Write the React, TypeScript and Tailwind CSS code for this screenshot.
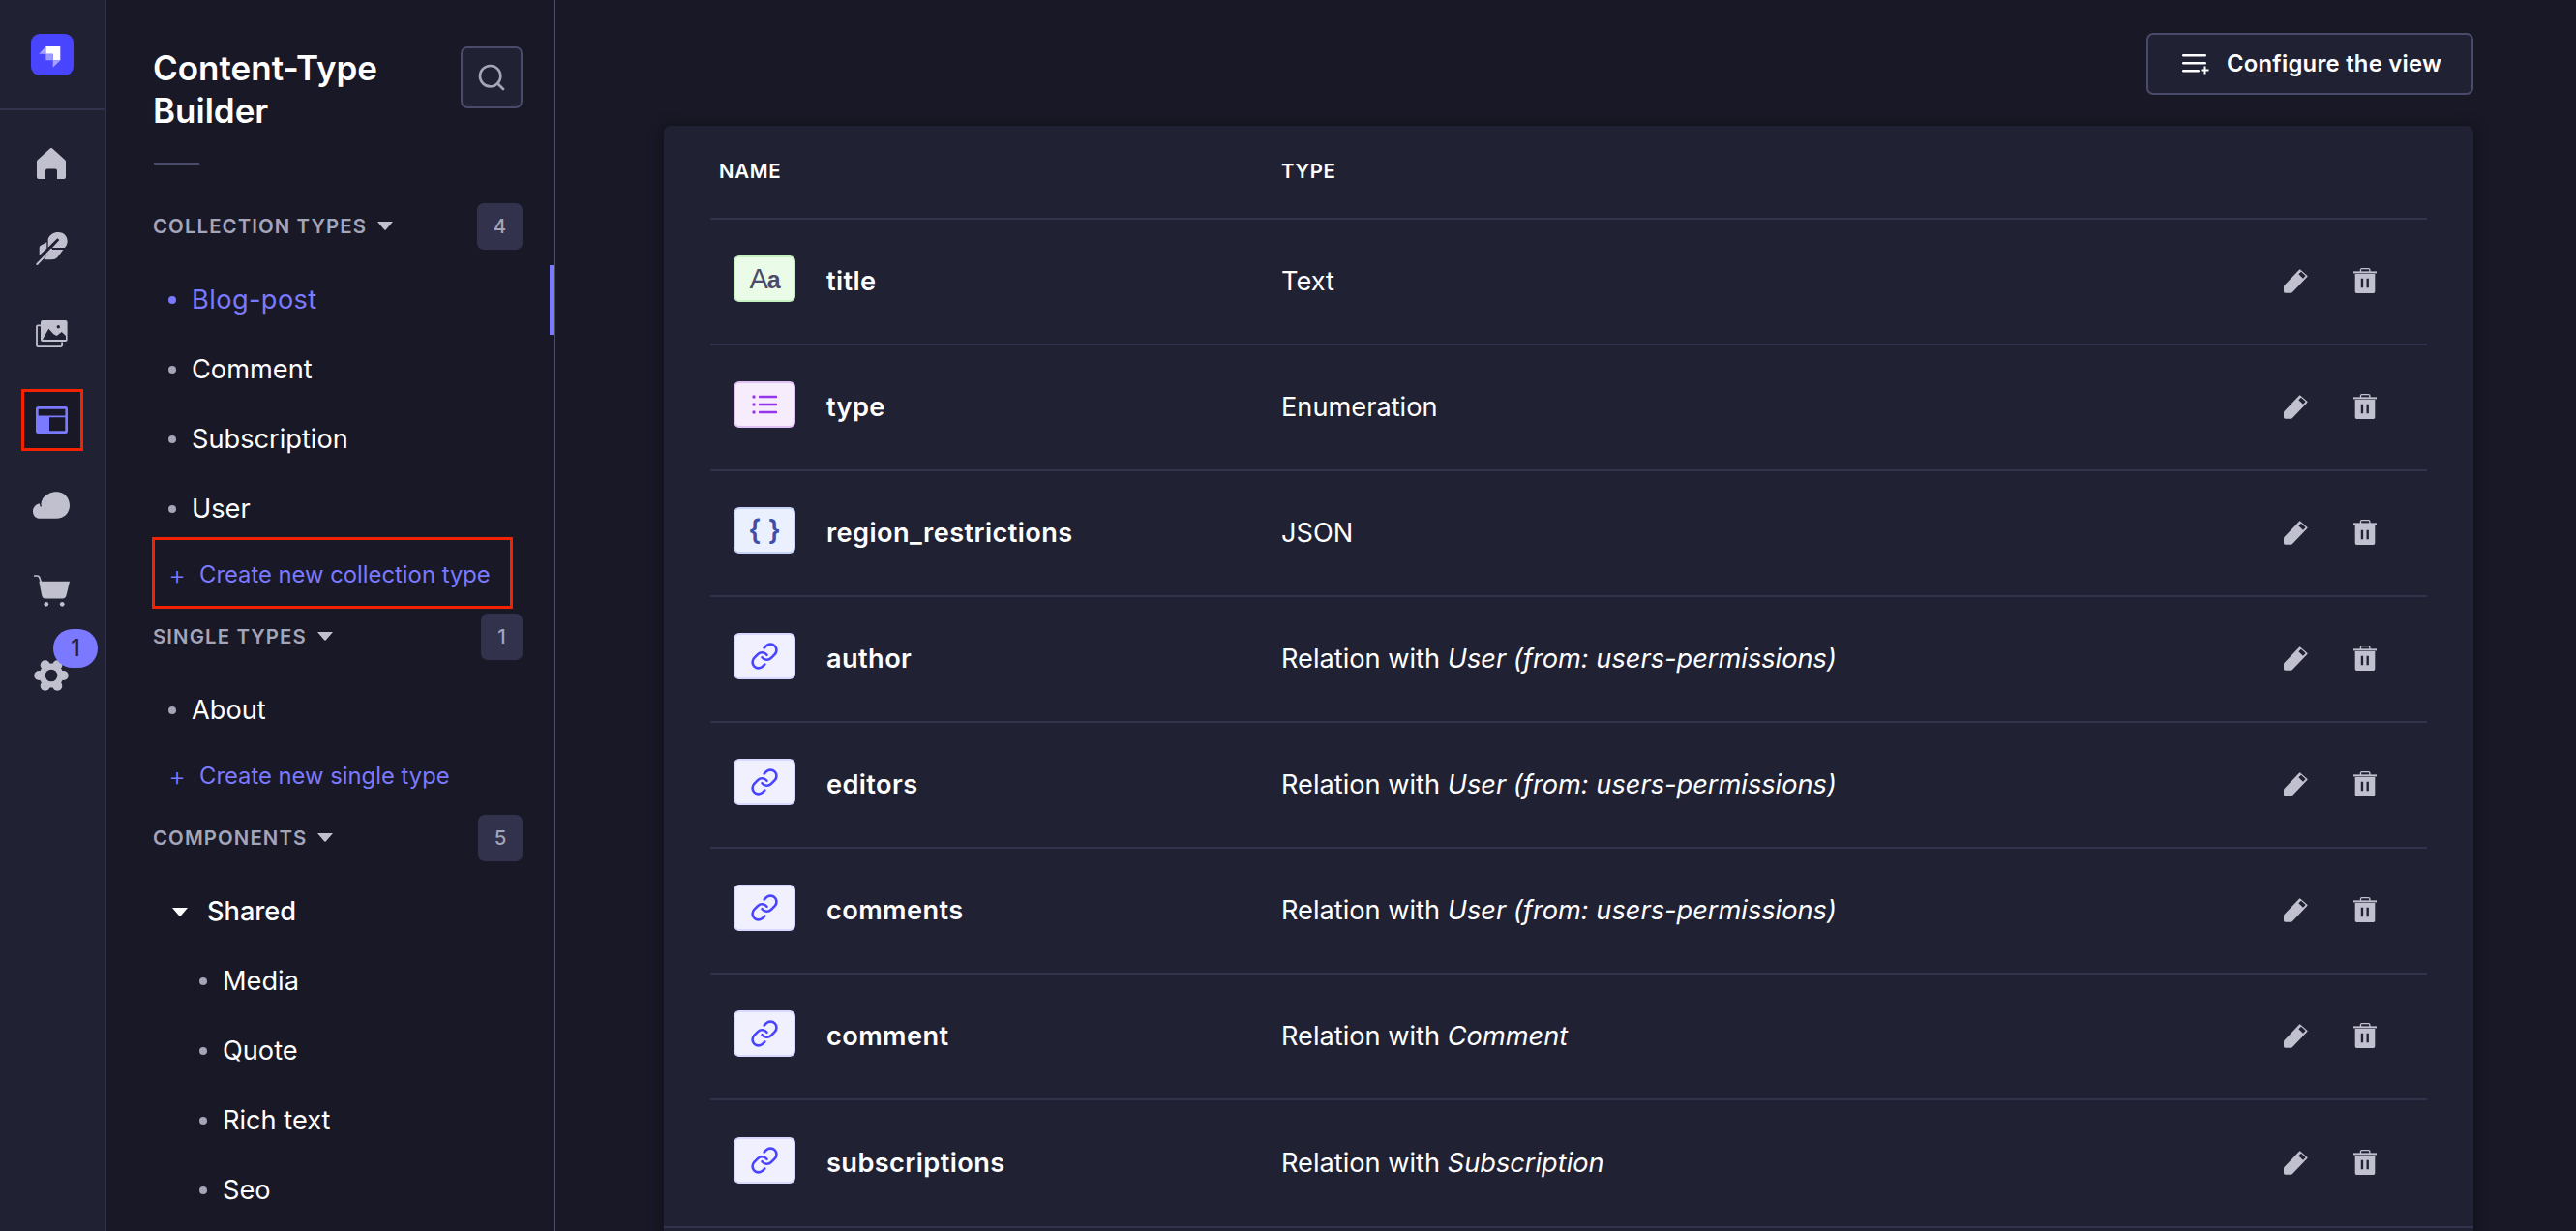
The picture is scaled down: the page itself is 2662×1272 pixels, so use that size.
import React from "react";
import { Link as LinkIcon, Search } from "lucide-react";

const LOGO = (
  <svg viewBox="0 0 44 43" className="w-[44px] h-[43px]">
    <rect width="44" height="43" rx="9" fill="#4945ff" />
    <path d="M15.300 13h15v14.300h-7.600v-6.600h-7.400z" fill="#fff" />
    <path d="M15.300 13v7.700h-7z" fill="#a5a3ff" />
    <path d="M15.300 20.700h7.400v6.600h-6.400a1 1 0 0 1-1-1z" fill="#9c9aff" />
    <path d="M22.700 27.300h7.600l-7.600 7.400z" fill="#a5a3ff" />
  </svg>
);

const HomeIcon = () => (
  <svg viewBox="0 0 30 32" className="w-[30px] h-[32px]" fill="#c0c0cf">
    <path d="M13.800.5a1.800 1.800 0 0 1 2.400 0l13 11.800a2 2 0 0 1 .8 1.500V30a2 2 0 0 1-2 2h-7v-8.500a2 2 0 0 0-2-2h-8a2 2 0 0 0-2 2V32H2a2 2 0 0 1-2-2V13.800a2 2 0 0 1 .8-1.500z" />
  </svg>
);
const FeatherIcon = () => (
  <svg viewBox="0 0 97 102" className="w-[33px] h-[34px]" fill="#c0c0cf">
    <path d="M10 72V48Q10 44 14 41L33 31V50z" />
    <path d="M37 47V22C40 8 55 0 68 0 88 0 97 15 97 28 97 38 92 45 88 48H50L72 24 66 19z" />
    <path d="M46 54H84L66 78Q60 85 48 85H24z" />
    <path d="M3 99 47 53" stroke="#c0c0cf" strokeWidth="6" strokeLinecap="round" />
  </svg>
);
const ImagesIcon = () => (
  <svg viewBox="0 0 33 28" className="w-[33px] h-[28px]" fill="none">
    <path d="M5 5.300H2.200a1.200 1.200 0 0 0-1.200 1.200V26a1.200 1.200 0 0 0 1.200 1.100H26a1.200 1.200 0 0 0 1.100-1.100v-3.500" stroke="#c0c0cf" strokeWidth="1.800" />
    <rect x="5" y="0" width="27.600" height="22" rx="2" fill="#c0c0cf" />
    <path d="M7.300 19.300 13.300 8.700 18.300 14.300 21.700 16 26.700 12 31 16V20H7.300z" fill="#212134" />
    <circle cx="23.300" cy="6.700" r="1.700" fill="#212134" />
  </svg>
);
const LayoutIcon = () => (
  <svg viewBox="0 0 33 28" className="w-[33px] h-[28px]" fill="#7b79ff">
    <path fillRule="evenodd" d="M2.500 0h28A2.500 2.500 0 0 1 33 2.500v23a2.500 2.500 0 0 1-2.500 2.500h-28A2.500 2.500 0 0 1 0 25.500v-23A2.500 2.500 0 0 1 2.500 0zM2.700 2.700v6.700h27.700V2.700zM14 11.300v14h16.300v-14z" />
  </svg>
);
const CloudIcon = () => (
  <svg viewBox="0 0 113 82" className="w-[38px] h-[28px]" fill="#c0c0cf">
    <path d="M22 82C8 82 0 72 0 60 0 46 12 36 24 36 28 14 50 0 72 0 96 0 113 18 113 42 113 65 96 82 72 82z" />
    <path d="M27 23Q20 35 25 45" fill="none" stroke="#212134" strokeWidth="4" />
  </svg>
);
const CartIcon = () => (
  <svg viewBox="0 0 110 98" className="w-[37px] h-[33px]" fill="#c0c0cf">
    <path d="M0 3H10Q16 3 18 10L22 24" fill="none" stroke="#c0c0cf" strokeWidth="5" strokeLinecap="round" />
    <path d="M16 20H110L100 62Q98 73 88 73H34Q26 73 24 62z" />
    <circle cx="38" cy="90" r="7" />
    <circle cx="87" cy="90" r="7" />
  </svg>
);
const GearIcon = () => (
  <svg viewBox="0 0 36 32" className="w-[36px] h-[32px]">
    <g fill="#c0c0cf">
      <circle cx="18" cy="16" r="12.500" />
      <circle cx="5.300" cy="16" r="5" />
      <circle cx="30.700" cy="16" r="5" />
      <circle cx="11.700" cy="5.200" r="5" />
      <circle cx="24.300" cy="5.200" r="5" />
      <circle cx="11.700" cy="26.800" r="5" />
      <circle cx="24.300" cy="26.800" r="5" />
    </g>
    <circle cx="18" cy="16" r="6.300" fill="#212134" />
  </svg>
);
const Caret = ({ color = "#c0c0cf" }: { color?: string }) => (
  <svg viewBox="0 0 16 9" className="w-[16px] h-[9px] shrink-0"><path d="M0 0h16L8.700 8.400a1 1 0 0 1-1.400 0z" fill={color} /></svg>
);
const PencilIcon = () => (
  <svg viewBox="0 0 75 75" className="w-[25px] h-[25px]" fill="#c0c0cf">
    <path fillRule="evenodd" d="M2 50 48 2Q50 0 52 2L73 20Q75 22 73 24L27 72Q25 74 22 74H4Q0 74 0 70V56Q0 52 2 50zM54 8 46 16 60 29 68 21z" />
  </svg>
);
const TrashIcon = () => (
  <svg viewBox="0 0 71 77" className="w-[24px] h-[26px]" fill="#c0c0cf">
    <path d="M22 12V6Q22 2 26 2H46Q50 2 50 6V12" fill="none" stroke="#c0c0cf" strokeWidth="4" />
    <rect x="0" y="10" width="71" height="6" />
    <path fillRule="evenodd" d="M5 18H66V72Q66 77 61 77H10Q5 77 5 72zM23 32V60H30V32zM40 32V60H47V32z" />
  </svg>
);
const ConfigureIcon = () => (
  <svg viewBox="0 0 28 22" className="w-[28px] h-[22px]" fill="#fff">
    <rect x="0" y="1" width="25" height="2.500" rx="1.200" />
    <rect x="0" y="9" width="25" height="2.500" rx="1.200" />
    <rect x="0" y="17" width="18" height="2.500" rx="1.200" />
    <path d="M22.500 13.500h2v3h3v2h-3v3h-2v-3h-3v-2h3z" />
  </svg>
);
const ListIcon = () => (
  <svg viewBox="0 0 26 22" className="w-[26px] h-[22px]" fill="#9736e8">
    <circle cx="2" cy="3" r="1.700" /><circle cx="2" cy="11" r="1.700" /><circle cx="2" cy="19" r="1.700" />
    <rect x="7" y="1.800" width="19" height="2.500" rx=".5" /><rect x="7" y="9.800" width="19" height="2.500" rx=".5" /><rect x="7" y="17.800" width="19" height="2.500" rx=".5" />
  </svg>
);

const Dot = ({ className = "bg-[#a5a5ba]" }: { className?: string }) => (
  <span className={`w-[8px] h-[8px] rounded-full shrink-0 ${className}`} />
);

const Item = ({ label, active }: { label: string; active?: boolean }) => (
  <div className="relative h-[72px] flex items-center pl-[15px]">
    <Dot className={active ? "bg-[#7b79ff]" : "bg-[#a5a5ba]"} />
    <span className={`ml-[16px] text-[27.2px] ${active ? "text-[#7b79ff] tracking-[0.4px]" : "text-white"}`}>{label}</span>
    {active && <span className="absolute right-[-32px] top-0 w-[4px] h-[72px] bg-[#7b79ff]" />}
  </div>
);
const SubItem = ({ label }: { label: string }) => (
  <div className="h-[72px] flex items-center pl-[47px]">
    <Dot />
    <span className="ml-[16px] text-[27.2px] text-white">{label}</span>
  </div>
);
const CreateLink = ({ label, boxed }: { label: string; boxed?: boolean }) => (
  <div className="relative h-[64px] flex items-center pl-[18px] text-[#7b79ff]">
    <span className="text-[27px] font-light leading-none w-[12px] flex justify-center">+</span>
    <span className="ml-[17px] text-[23.8px] text-[#7b79ff]">{label}</span>
    {boxed && <span className="absolute left-[-2px] top-[-7px] w-[373px] h-[74px] border-[3px] border-[#f52200]" />}
  </div>
);
const Section = ({ label, count, badgeW }: { label: string; count: number; badgeW: string }) => (
  <div className="flex items-center justify-between h-[48px]">
    <div className="flex items-center gap-[11px] ml-[-1px]">
      <span className="text-[20.4px] font-semibold tracking-[1.1px] text-[#a5a5ba] uppercase">{label}</span>
      <Caret />
    </div>
    <span className={`h-[48px] rounded-[7px] bg-[#32324d] flex items-center justify-center text-[20.4px] font-medium text-[#a5a5ba] ${badgeW}`}>{count}</span>
  </div>
);

const IconBox = ({ className, children }: { className: string; children: React.ReactNode }) => (
  <span className={`w-[64px] h-[48px] mb-[6px] rounded-[6px] border-2 flex items-center justify-center shrink-0 ${className}`}>{children}</span>
);
const RelationBox = () => (
  <IconBox className="bg-[#f0f0ff] border-[#d9d8ff]">
    <LinkIcon size={30} color="#4945ff" strokeWidth={2.1} />
  </IconBox>
);

type Row = { name: string; type: React.ReactNode; icon: React.ReactNode };
const rel = (t: string) => <>Relation with <em>{t}</em></>;
const rows: Row[] = [
  {
    name: "title", type: "Text",
    icon: (
      <IconBox className="bg-[#eafbe7] border-[#c6f0c2]">
        <span className="text-[#4a4a6a] font-medium text-[29px] leading-none tracking-[-1px] font-['Liberation_Sans',sans-serif]">A<span className="text-[25px] font-bold">a</span></span>
      </IconBox>
    ),
  },
  { name: "type", type: "Enumeration", icon: <IconBox className="bg-[#f6ecfc] border-[#e0c1f4]"><ListIcon /></IconBox> },
  {
    name: "region_restrictions", type: "JSON",
    icon: (
      <IconBox className="bg-[#eaf0fd] border-[#c6d2f7]">
        <span className="text-[#3f4ea8] font-semibold text-[29px] leading-none whitespace-pre mb-[2px]">{"{ }"}</span>
      </IconBox>
    ),
  },
  { name: "author", type: rel("User (from: users-permissions)"), icon: <RelationBox /> },
  { name: "editors", type: rel("User (from: users-permissions)"), icon: <RelationBox /> },
  { name: "comments", type: rel("User (from: users-permissions)"), icon: <RelationBox /> },
  { name: "comment", type: rel("Comment"), icon: <RelationBox /> },
  { name: "subscriptions", type: rel("Subscription"), icon: <RelationBox /> },
];

const navIcons = [<HomeIcon key="h" />, <FeatherIcon key="f" />, <ImagesIcon key="i" />];

export default function App() {
  return (
    <div className="flex h-screen overflow-hidden bg-[#181826] text-white font-['Inter',sans-serif]">
      {/* Left rail */}
      <nav className="w-[110px] shrink-0 bg-[#212134] border-r-2 border-[#32324d] flex flex-col">
        <div className="h-[114px] shrink-0 border-b-2 border-[#32324d] flex items-center justify-center">{LOGO}</div>
        <div className="pt-[11px] flex flex-col">
          {navIcons.map((ic, i) => (
            <div key={i} className="h-[88.2px] flex items-center justify-center pr-[2px]">{ic}</div>
          ))}
          <div className="relative h-[88.2px] flex items-center justify-center pr-[2px] z-0">
            <span className="absolute left-[22px] top-[12px] w-[64px] h-[64px] border-[3px] border-[#f52200] bg-[#181826] -z-10" />
            <LayoutIcon />
          </div>
          <div className="h-[88.2px] flex items-center justify-center pr-[2px]"><CloudIcon /></div>
          <div className="h-[88.2px] flex items-center justify-center pr-[2px]"><CartIcon /></div>
          <div className="relative h-[88.2px] flex items-center justify-center pr-[2px]">
            <GearIcon />
            <span className="absolute left-[55px] top-[-4px] w-[46px] h-[40px] rounded-full bg-[#7b79ff] flex items-center justify-center text-[23.8px] text-[#212134]">1</span>
          </div>
        </div>
      </nav>

      {/* Sidebar */}
      <aside className="w-[464px] shrink-0 border-r-2 border-[#4a4a6a] pl-[49px] pr-[32px] pt-[48px]">
        <div className="flex justify-between items-start">
          <h1 className="text-[35px] leading-[44px] font-semibold ml-[-1px] w-[250px]">Content-Type Builder</h1>
          <button className="w-[64px] h-[64px] rounded-[7px] border-2 border-[#4a4a6a] bg-[#212134] flex items-center justify-center">
            <Search size={32} color="#a5a5ba" strokeWidth={2} />
          </button>
        </div>
        <div className="w-[47px] h-[2px] bg-[#4a4a6a] mt-[32px] mb-[40px]" />

        <Section label="Collection types" count={4} badgeW="w-[47px]" />
        <div className="mt-[16px]">
          <Item label="Blog-post" active />
          <Item label="Comment" />
          <Item label="Subscription" />
          <Item label="User" />
          <CreateLink label="Create new collection type" boxed />
        </div>
        <div className="mt-[8px]"><Section label="Single types" count={1} badgeW="w-[43px]" /></div>
        <div className="mt-[16px]">
          <Item label="About" />
          <CreateLink label="Create new single type" />
        </div>
        <div className="mt-[8px]"><Section label="Components" count={5} badgeW="w-[46px]" /></div>
        <div className="mt-[16px]">
          <div className="h-[72px] flex items-center pl-[19px]">
            <Caret color="#ffffff" />
            <span className="ml-[20px] text-[27.2px] font-medium text-white">Shared</span>
          </div>
          <SubItem label="Media" />
          <SubItem label="Quote" />
          <SubItem label="Rich text" />
          <SubItem label="Seo" />
        </div>
      </aside>

      {/* Main */}
      <main className="flex-1 min-w-0 pl-[112px] pr-[106px] pt-[34px]">
        <div className="flex justify-end">
          <button className="w-[338px] h-[64px] rounded-[7px] border-2 border-[#4a4a6a] bg-[#212134] flex items-center justify-start pl-[35px] gap-[18px]">
            <ConfigureIcon />
            <span className="text-[23.8px] font-semibold text-white tracking-[0.25px]">Configure the view</span>
          </button>
        </div>
        <section className="mt-[32px] rounded-t-[7px] bg-[#212134] shadow-[0_2px_16px_rgba(3,3,5,0.35)]">
          <div className="px-[48px]">
            <div className="h-[97px] flex items-center border-b-2 border-[#32324d] text-[20.4px] font-semibold uppercase">
              <span className="w-[590px] pl-[9px] tracking-[0.7px]">Name</span>
              <span className="tracking-[0.7px]">Type</span>
            </div>
            {rows.map((r, i) => (
              <div key={r.name} className={`h-[130px] flex items-center ${i < rows.length - 1 ? "border-b-2 border-[#32324d]" : ""}`}>
                <div className="w-[590px] pl-[24px] flex items-center gap-[32px]">
                  {r.icon}
                  <span className="text-[27.2px] font-semibold tracking-[0.4px]">{r.name}</span>
                </div>
                <div className="flex-1 text-[27.2px]">{r.type}</div>
                <div className="flex items-center gap-[47px] pr-[52px] mb-[2px]">
                  <PencilIcon />
                  <TrashIcon />
                </div>
              </div>
            ))}
          </div>
          <div className="border-t-2 border-[#32324d] h-[40px]" />
        </section>
      </main>
    </div>
  );
}
